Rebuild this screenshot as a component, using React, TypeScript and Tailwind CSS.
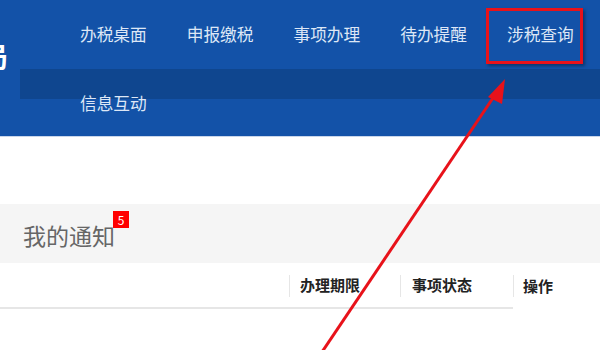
import React from 'react';

const navTop = ['办税桌面', '申报缴税', '事项办理', '待办提醒', '涉税查询'];

const cjk = { fontFamily: '"Microsoft YaHei", "Noto Sans CJK SC", "Noto Sans", sans-serif' };

const App = () => {
  return (
    <div className="relative w-[600px] h-[350px] overflow-hidden bg-white" style={cjk}>
      {/* header */}
      <div className="relative h-[137px] bg-[#1352a8] border-b border-[#c9d6ea]">
        <div className="absolute left-[20px] right-0 top-[69px] h-[30px] bg-[#0f468f]" />
        <div className="relative flex h-full">
          <div className="w-[80px] shrink-0 overflow-hidden">
            <div className="-ml-[20px] mt-[42px] text-[28px] leading-[28px] font-bold text-white">局</div>
            <div className="-ml-[6px] mt-[8px] text-[9px] leading-[10px] text-white">u</div>
          </div>
          <div className="flex flex-wrap gap-x-[40px] content-start">
            {navTop.map((t) => (
              <div key={t} className="h-[69px] flex items-center text-[16.7px] text-[#dde7f6]">
                {t}
              </div>
            ))}
            <div className="h-[69px] flex items-center text-[16.7px] text-[#dde7f6]">信息互动</div>
          </div>
        </div>
      </div>

      <div className="h-[67px]" />

      {/* notice band */}
      <div className="h-[59px] bg-[#f5f5f5] flex items-center pl-[23px]">
        <div className="relative text-[23px] text-[#666] mt-[3px]">
          我的通知
          <span className="absolute -right-[14px] -top-[7px] w-[16px] h-[17px] bg-[#ff0000] text-white text-[12px] leading-[17px] text-center">
            5
          </span>
        </div>
      </div>

      {/* table header */}
      <div className="flex h-[46px] text-[15px] font-bold text-[#222]">
        <div className="w-[289px] border-b-2 border-[#e6e6e6]" />
        <div className="w-[111px] flex items-center pl-[11px] border-b-2 border-[#e6e6e6] relative">
          <span className="absolute left-0 top-[12px] h-[22px] w-px bg-[#e6e6e6]" />
          办理期限
        </div>
        <div className="w-[113px] flex items-center pl-[12px] border-b-2 border-[#e6e6e6] relative">
          <span className="absolute left-0 top-[12px] h-[22px] w-px bg-[#e6e6e6]" />
          事项状态
        </div>
        <div className="flex-1 flex items-center pl-[10px] relative">
          <span className="absolute left-0 top-[12px] h-[22px] w-px bg-[#e6e6e6]" />
          操作
        </div>
      </div>

      {/* annotation: red box + arrow */}
      <div className="absolute left-[486px] top-[8px] w-[97px] h-[56px] border-[3px] border-[#e8121a] shadow-[2px_2px_3px_rgba(0,0,0,0.35)]" />
      <svg className="absolute inset-0" width="600" height="350" viewBox="0 0 600 350">
        <line x1="322" y1="352" x2="497" y2="92" stroke="#e8121a" strokeWidth="3" />
        <polygon points="505,79 488,97 502,104" fill="#e8121a" />
      </svg>
    </div>
  );
};

export default App;
